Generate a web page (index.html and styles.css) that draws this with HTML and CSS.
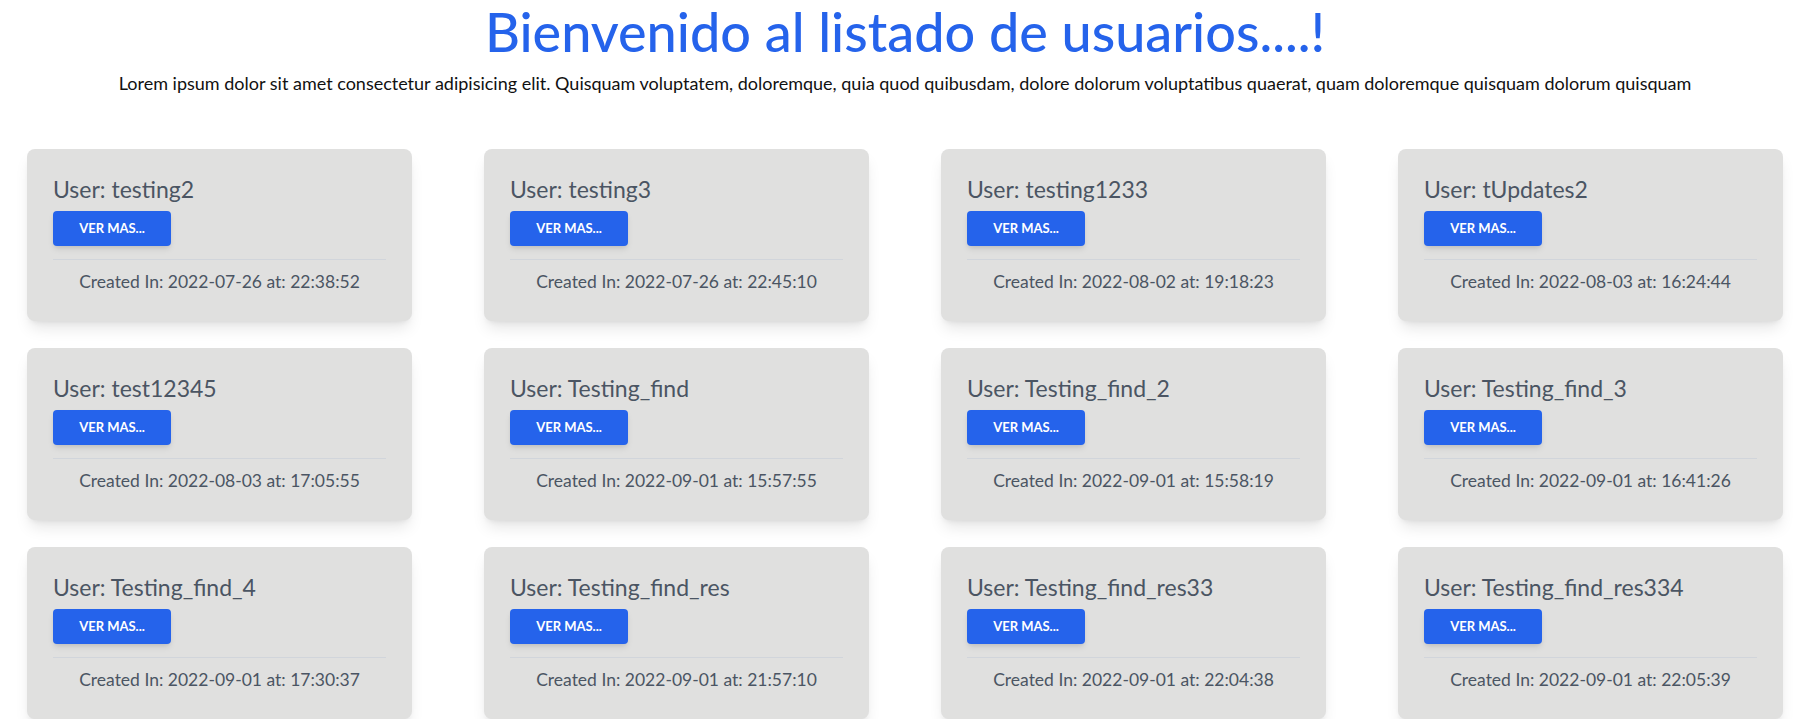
FILE: index.html
```html
<!DOCTYPE html>
<html lang="es">
<head>
<meta charset="utf-8">
<title>Usuarios</title>
<link rel="stylesheet" href="styles.css">
</head>
<body>
<header class="intro">
  <h1 class="intro-title">Bienvenido al listado de usuarios....!</h1>
  <p class="intro-text">Lorem ipsum dolor sit amet consectetur adipisicing elit. Quisquam voluptatem, doloremque, quia quod quibusdam, dolore dolorum voluptatibus quaerat, quam doloremque quisquam dolorum quisquam</p>
</header>
<main class="grid">
  <div class="card"><div class="card-body"><h5 class="card-title">User: testing2</h5><button class="btn">VER MAS...</button></div><div class="card-footer">Created In: 2022-07-26 at: 22:38:52</div></div>
  <div class="card"><div class="card-body"><h5 class="card-title">User: testing3</h5><button class="btn">VER MAS...</button></div><div class="card-footer">Created In: 2022-07-26 at: 22:45:10</div></div>
  <div class="card"><div class="card-body"><h5 class="card-title">User: testing1233</h5><button class="btn">VER MAS...</button></div><div class="card-footer">Created In: 2022-08-02 at: 19:18:23</div></div>
  <div class="card"><div class="card-body"><h5 class="card-title">User: tUpdates2</h5><button class="btn">VER MAS...</button></div><div class="card-footer">Created In: 2022-08-03 at: 16:24:44</div></div>
  <div class="card"><div class="card-body"><h5 class="card-title">User: test12345</h5><button class="btn">VER MAS...</button></div><div class="card-footer">Created In: 2022-08-03 at: 17:05:55</div></div>
  <div class="card"><div class="card-body"><h5 class="card-title">User: Testing_find</h5><button class="btn">VER MAS...</button></div><div class="card-footer">Created In: 2022-09-01 at: 15:57:55</div></div>
  <div class="card"><div class="card-body"><h5 class="card-title">User: Testing_find_2</h5><button class="btn">VER MAS...</button></div><div class="card-footer">Created In: 2022-09-01 at: 15:58:19</div></div>
  <div class="card"><div class="card-body"><h5 class="card-title">User: Testing_find_3</h5><button class="btn">VER MAS...</button></div><div class="card-footer">Created In: 2022-09-01 at: 16:41:26</div></div>
  <div class="card"><div class="card-body"><h5 class="card-title">User: Testing_find_4</h5><button class="btn">VER MAS...</button></div><div class="card-footer">Created In: 2022-09-01 at: 17:30:37</div></div>
  <div class="card"><div class="card-body"><h5 class="card-title">User: Testing_find_res</h5><button class="btn">VER MAS...</button></div><div class="card-footer">Created In: 2022-09-01 at: 21:57:10</div></div>
  <div class="card"><div class="card-body"><h5 class="card-title">User: Testing_find_res33</h5><button class="btn">VER MAS...</button></div><div class="card-footer">Created In: 2022-09-01 at: 22:04:38</div></div>
  <div class="card"><div class="card-body"><h5 class="card-title">User: Testing_find_res334</h5><button class="btn">VER MAS...</button></div><div class="card-footer">Created In: 2022-09-01 at: 22:05:39</div></div>
</main>
</body>
</html>
```
FILE: styles.css
```css
* { box-sizing: border-box; }
html, body { margin: 0; padding: 0; background: #ffffff; }
body { font-family: "Lato", "Open Sans", sans-serif; color: #111111; }

.intro {
  display: flex;
  flex-direction: column;
  align-items: center;
  padding-top: 0;
  padding-left: 13px;
  text-align: center;
}
.intro-title {
  margin: 0;
  font-size: 54px;
  line-height: 64px;
  font-weight: 500;
  color: #2563eb;
  white-space: nowrap;
}
.intro-text {
  margin: 5px 0 0;
  font-size: 18px;
  line-height: 28px;
  color: #111111;
  white-space: nowrap;
}

.grid {
  display: grid;
  grid-template-columns: repeat(4, 385px);
  column-gap: 72px;
  row-gap: 27px;
  padding-left: 27px;
  margin-top: 52px;
}

.card {
  background: #e0e0df;
  border-radius: 8px;
  box-shadow: 0 10px 15px -3px rgba(0,0,0,0.1), 0 4px 6px -4px rgba(0,0,0,0.1);
  height: 172px;
}
.card-body {
  margin: 0 26px;
  padding: 24px 0 13px;
  border-bottom: 1px solid #d1d5db;
}
.card-title {
  margin: 0;
  font-size: 23px;
  line-height: 32px;
  font-weight: 400;
  color: #4b5563;
}
.btn {
  display: block;
  margin-top: 6px;
  width: 118px;
  height: 35px;
  border: 0;
  border-radius: 4px;
  background: #2563eb;
  color: #ffffff;
  font-family: "Lato", "Open Sans", sans-serif;
  font-size: 13px;
  font-weight: 700;
  line-height: 15px;
  box-shadow: 0 4px 6px -1px rgba(0,0,0,0.1), 0 2px 4px -2px rgba(0,0,0,0.1);
  padding: 0;
}
.card-footer {
  padding: 8px 26px 0;
  text-align: center;
  font-size: 17.5px;
  line-height: 28px;
  color: #4b5563;
}
```
